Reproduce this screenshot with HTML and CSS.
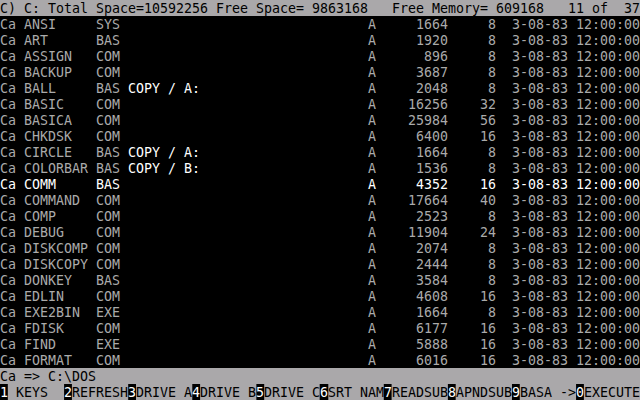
FILE: index.html
```html
<!DOCTYPE html>
<html>
<head>
<meta charset="utf-8">
<link rel="stylesheet" href="styles.css">
</head>
<body>
<div class="frame">
<div class="screen">
  <div class="row bar">C) C: Total Space=10592256 Free Space= 9863168   Free Memory= 609168   11 of  37</div>

  <div class="row"><span class="ca">Ca</span><span class="name">ANSI</span><span class="ext">SYS</span><span class="note"></span><span class="attr">A</span><span class="size">1664</span><span class="blk">8</span><span class="date">3-08-83</span><span class="time">12:00:00</span></div>
  <div class="row"><span class="ca">Ca</span><span class="name">ART</span><span class="ext">BAS</span><span class="note"></span><span class="attr">A</span><span class="size">1920</span><span class="blk">8</span><span class="date">3-08-83</span><span class="time">12:00:00</span></div>
  <div class="row"><span class="ca">Ca</span><span class="name">ASSIGN</span><span class="ext">COM</span><span class="note"></span><span class="attr">A</span><span class="size">896</span><span class="blk">8</span><span class="date">3-08-83</span><span class="time">12:00:00</span></div>
  <div class="row"><span class="ca">Ca</span><span class="name">BACKUP</span><span class="ext">COM</span><span class="note"></span><span class="attr">A</span><span class="size">3687</span><span class="blk">8</span><span class="date">3-08-83</span><span class="time">12:00:00</span></div>
  <div class="row"><span class="ca">Ca</span><span class="name">BALL</span><span class="ext">BAS</span><span class="note hi">COPY / A:</span><span class="attr">A</span><span class="size">2048</span><span class="blk">8</span><span class="date">3-08-83</span><span class="time">12:00:00</span></div>
  <div class="row"><span class="ca">Ca</span><span class="name">BASIC</span><span class="ext">COM</span><span class="note"></span><span class="attr">A</span><span class="size">16256</span><span class="blk">32</span><span class="date">3-08-83</span><span class="time">12:00:00</span></div>
  <div class="row"><span class="ca">Ca</span><span class="name">BASICA</span><span class="ext">COM</span><span class="note"></span><span class="attr">A</span><span class="size">25984</span><span class="blk">56</span><span class="date">3-08-83</span><span class="time">12:00:00</span></div>
  <div class="row"><span class="ca">Ca</span><span class="name">CHKDSK</span><span class="ext">COM</span><span class="note"></span><span class="attr">A</span><span class="size">6400</span><span class="blk">16</span><span class="date">3-08-83</span><span class="time">12:00:00</span></div>
  <div class="row"><span class="ca">Ca</span><span class="name">CIRCLE</span><span class="ext">BAS</span><span class="note hi">COPY / A:</span><span class="attr">A</span><span class="size">1664</span><span class="blk">8</span><span class="date">3-08-83</span><span class="time">12:00:00</span></div>
  <div class="row"><span class="ca">Ca</span><span class="name">COLORBAR</span><span class="ext">BAS</span><span class="note hi">COPY / B:</span><span class="attr">A</span><span class="size">1536</span><span class="blk">8</span><span class="date">3-08-83</span><span class="time">12:00:00</span></div>
  <div class="row current"><span class="ca">Ca</span><span class="name">COMM</span><span class="ext">BAS</span><span class="note"></span><span class="attr">A</span><span class="size">4352</span><span class="blk">16</span><span class="date">3-08-83</span><span class="time">12:00:00</span></div>
  <div class="row"><span class="ca">Ca</span><span class="name">COMMAND</span><span class="ext">COM</span><span class="note"></span><span class="attr">A</span><span class="size">17664</span><span class="blk">40</span><span class="date">3-08-83</span><span class="time">12:00:00</span></div>
  <div class="row"><span class="ca">Ca</span><span class="name">COMP</span><span class="ext">COM</span><span class="note"></span><span class="attr">A</span><span class="size">2523</span><span class="blk">8</span><span class="date">3-08-83</span><span class="time">12:00:00</span></div>
  <div class="row"><span class="ca">Ca</span><span class="name">DEBUG</span><span class="ext">COM</span><span class="note"></span><span class="attr">A</span><span class="size">11904</span><span class="blk">24</span><span class="date">3-08-83</span><span class="time">12:00:00</span></div>
  <div class="row"><span class="ca">Ca</span><span class="name">DISKCOMP</span><span class="ext">COM</span><span class="note"></span><span class="attr">A</span><span class="size">2074</span><span class="blk">8</span><span class="date">3-08-83</span><span class="time">12:00:00</span></div>
  <div class="row"><span class="ca">Ca</span><span class="name">DISKCOPY</span><span class="ext">COM</span><span class="note"></span><span class="attr">A</span><span class="size">2444</span><span class="blk">8</span><span class="date">3-08-83</span><span class="time">12:00:00</span></div>
  <div class="row"><span class="ca">Ca</span><span class="name">DONKEY</span><span class="ext">BAS</span><span class="note"></span><span class="attr">A</span><span class="size">3584</span><span class="blk">8</span><span class="date">3-08-83</span><span class="time">12:00:00</span></div>
  <div class="row"><span class="ca">Ca</span><span class="name">EDLIN</span><span class="ext">COM</span><span class="note"></span><span class="attr">A</span><span class="size">4608</span><span class="blk">16</span><span class="date">3-08-83</span><span class="time">12:00:00</span></div>
  <div class="row"><span class="ca">Ca</span><span class="name">EXE2BIN</span><span class="ext">EXE</span><span class="note"></span><span class="attr">A</span><span class="size">1664</span><span class="blk">8</span><span class="date">3-08-83</span><span class="time">12:00:00</span></div>
  <div class="row"><span class="ca">Ca</span><span class="name">FDISK</span><span class="ext">COM</span><span class="note"></span><span class="attr">A</span><span class="size">6177</span><span class="blk">16</span><span class="date">3-08-83</span><span class="time">12:00:00</span></div>
  <div class="row"><span class="ca">Ca</span><span class="name">FIND</span><span class="ext">EXE</span><span class="note"></span><span class="attr">A</span><span class="size">5888</span><span class="blk">16</span><span class="date">3-08-83</span><span class="time">12:00:00</span></div>
  <div class="row"><span class="ca">Ca</span><span class="name">FORMAT</span><span class="ext">COM</span><span class="note"></span><span class="attr">A</span><span class="size">6016</span><span class="blk">16</span><span class="date">3-08-83</span><span class="time">12:00:00</span></div>

  <div class="row bar">Ca =&gt; C:\DOS</div>

  <div class="row keys"><span class="fk"><span class="num">1</span><span class="lbl"> KEYS  </span></span><span class="fk"><span class="num">2</span><span class="lbl">REFRESH</span></span><span class="fk"><span class="num">3</span><span class="lbl">DRIVE A</span></span><span class="fk"><span class="num">4</span><span class="lbl">DRIVE B</span></span><span class="fk"><span class="num">5</span><span class="lbl">DRIVE C</span></span><span class="fk"><span class="num">6</span><span class="lbl">SRT NAM</span></span><span class="fk"><span class="num">7</span><span class="lbl">READSUB</span></span><span class="fk"><span class="num">8</span><span class="lbl">APNDSUB</span></span><span class="fk"><span class="num">9</span><span class="lbl">BASA -&gt;</span></span><span class="fk"><span class="num">0</span><span class="lbl">EXECUTE</span></span></div>
</div>
</div>
</body>
</html>
```
FILE: styles.css
```css
html, body {
  margin: 0;
  padding: 0;
  background: #000;
}

/* the 640x400 display */
.frame {
  width: 640px;
  height: 400px;
  overflow: hidden;
  background: #000;
}

/* 80x25 text screen: laid out at 17px DejaVu Sans Mono (20px rows),
   then scaled to 8x16 pixel character cells */
.screen {
  width: 80ch;
  height: 500px;
  display: flex;
  flex-direction: column;
  transform: scale(0.78164, 0.8);
  transform-origin: 0 0;
  font-family: "DejaVu Sans Mono", "Liberation Mono", monospace;
  font-size: 17px;
  line-height: 20px;
  color: #aaaaaa;
  background: #000;
}

.row {
  flex: 0 0 20px;
  height: 20px;
  display: flex;
  white-space: pre;
}

.row span {
  display: block;
}

.bar {
  background: #aaa8aa;
  color: #000;
}

.current {
  color: #ffffff;
}

.ca   { width: 3ch; }
.name { width: 9ch; }
.ext  { width: 4ch; }
.note { width: 30ch; }
.attr { width: 2ch; }
.size { width: 8ch; text-align: right; }
.blk  { width: 6ch; text-align: right; }
.date { width: 9ch; text-align: right; }
.time { width: 9ch; text-align: right; }

.hi { color: #ffffff; }

.keys {
  background: #aaa8aa;
}

.row .fk {
  display: flex;
  width: 8ch;
}

.fk .num {
  width: 1ch;
  background: #000;
  color: #fff;
}

.fk .lbl {
  width: 7ch;
  color: #000;
}
```
